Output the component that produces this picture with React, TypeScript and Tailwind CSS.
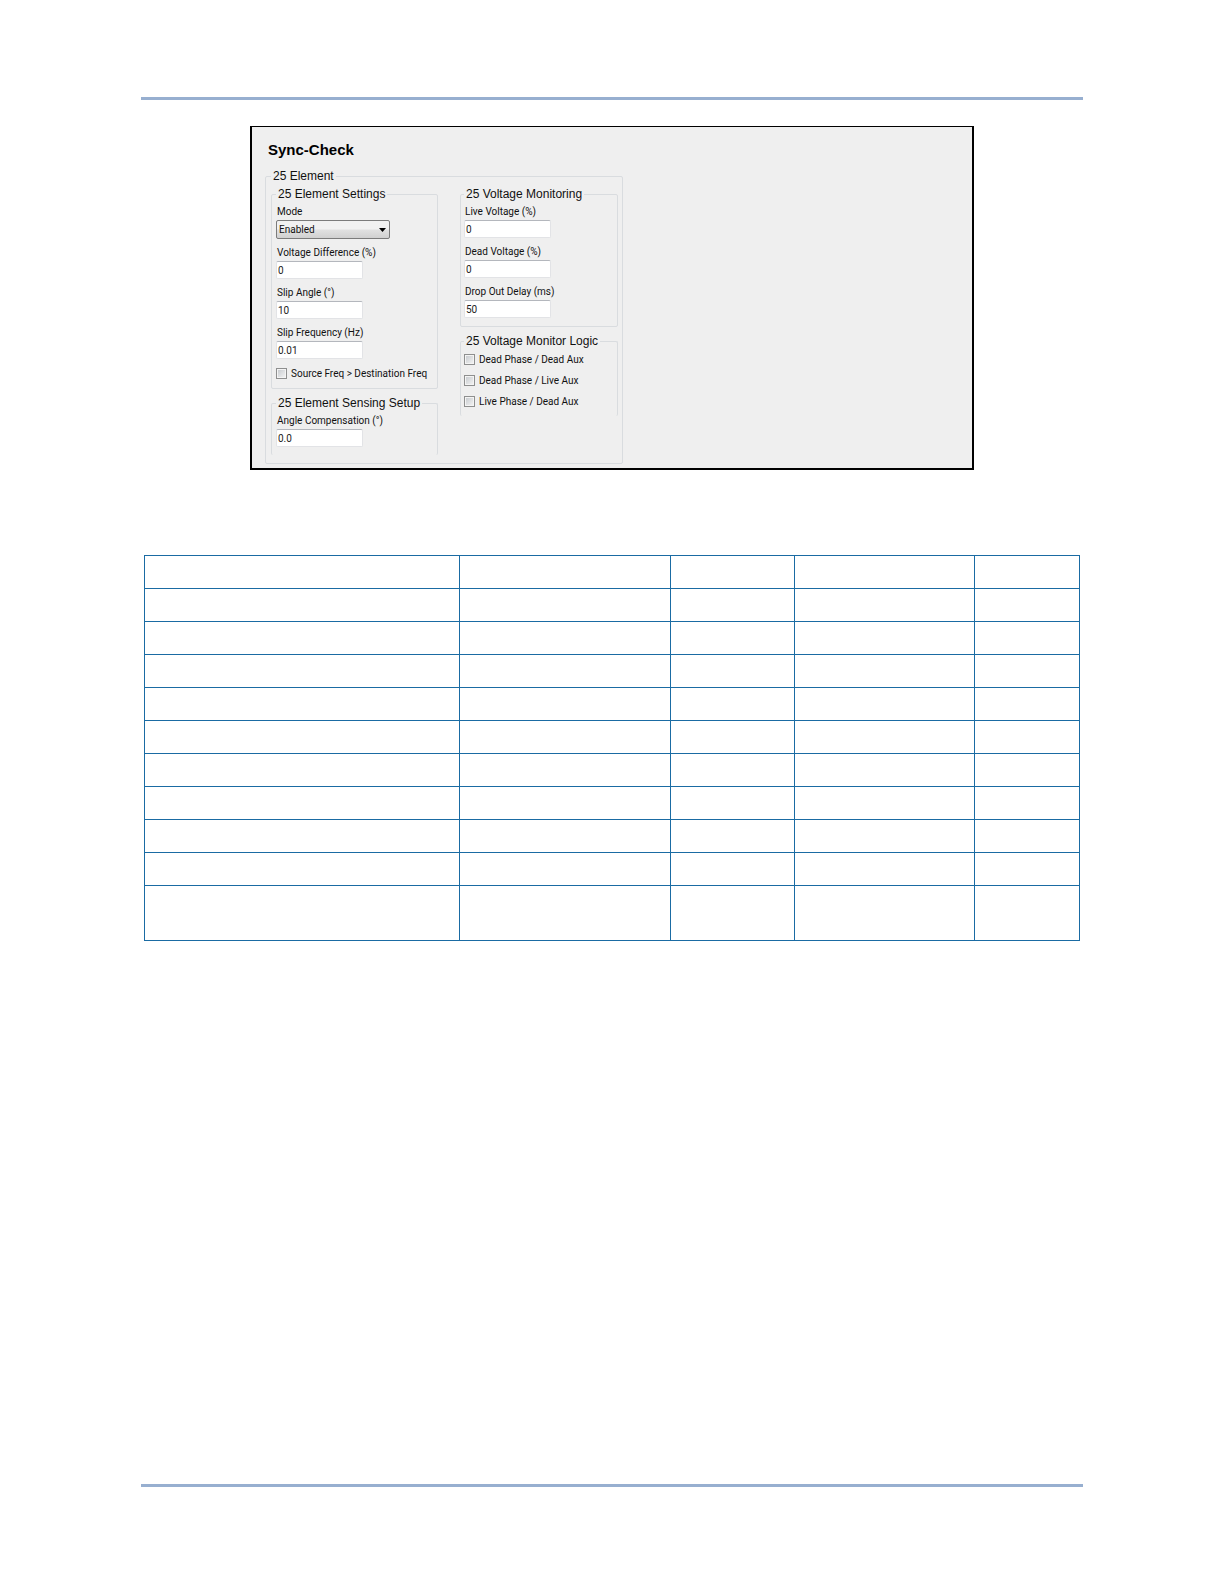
import { useState } from "react";
import type { ReactNode } from "react";

const ROWS = Array.from({ length: 11 }, (_, i) => i);
const COLUMNS = ["w-[315px]", "w-[211px]", "w-[124px]", "w-[180px]", "w-[105px]"];

type GroupProps = {
  title: string;
  className: string;
  children: ReactNode;
};

function Group({ title, className, children }: GroupProps) {
  return (
    <fieldset className={`min-w-0 rounded-xs border border-[#d9dcdf] ${className}`}>
      <legend className="px-0.5 font-['Liberation_Sans',Arial,sans-serif] text-xs leading-4 text-[#111]">
        {title}
      </legend>
      {children}
    </fieldset>
  );
}

type FieldProps = {
  id: string;
  label: string;
  initial: string;
};

function TextField({ id, label, initial }: FieldProps) {
  const [value, setValue] = useState(initial);

  return (
    <div className="flex flex-col items-start">
      <label htmlFor={id} className="pl-px leading-4">
        {label}
      </label>
      <input
        id={id}
        type="text"
        value={value}
        onChange={(e) => setValue(e.target.value)}
        className="h-[18px] w-[87px] rounded-xs border border-[#e2e3e6] border-t-[#b4b7bd] bg-white px-px text-[#222] outline-none"
      />
    </div>
  );
}

function CheckField({ id, label }: { id: string; label: string }) {
  return (
    <div className="flex h-4 items-center gap-1">
      <input
        id={id}
        type="checkbox"
        className="size-[11px] shrink-0 appearance-none border border-[#8e8f8f] bg-linear-to-br from-[#c4c8cc] to-[#f6f6f6] shadow-[inset_0_0_0_1px_#f4f4f4] checked:bg-none checked:bg-[#3c5a80]"
      />
      <label htmlFor={id} className="whitespace-nowrap">
        {label}
      </label>
    </div>
  );
}

function ModeSelect() {
  return (
    <div className="flex flex-col items-start">
      <label htmlFor="mode" className="pl-px leading-4">
        Mode
      </label>
      <div className="relative">
        <select
          id="mode"
          defaultValue="Enabled"
          className="block h-[19px] w-[114px] appearance-none rounded-xs border border-[#7b7b7b] bg-linear-to-b from-[#f1f1f1] from-45% via-[#e0e0e0] via-55% to-[#d0d0d0] pl-0.5 text-[#111] outline-none"
        >
          <option>Enabled</option>
          <option>Disabled</option>
        </select>
        <svg
          viewBox="0 0 7 4"
          className="pointer-events-none absolute top-2 right-1 h-1 w-[7px]"
          aria-hidden="true"
        >
          <path d="M0 0h7L3.5 4z" fill="#000" />
        </svg>
      </div>
    </div>
  );
}

function SyncCheckPanel() {
  return (
    <section className="mx-auto mt-[26px] w-full max-w-[724px] border-x-2 border-t border-b-2 border-black bg-[#efefef] px-[13px] pt-[13px] pb-1 font-[Roboto,Arial,sans-serif] text-[10px] text-[#111]">
      <h1 className="pl-[3px] font-['Liberation_Sans',Arial,sans-serif] text-[15px] leading-5 font-bold text-black">
        Sync-Check
      </h1>
      <Group title="25 Element" className="mt-2 w-fit pt-0.5 pr-1 pb-2 pl-[5px]">
        <div className="flex items-start gap-[22px]">
          <div className="flex w-[167px] flex-col gap-1.5">
            <Group title="25 Element Settings" className="px-1 pt-0.5 pb-[7px]">
              <div className="flex flex-col gap-1.5">
                <ModeSelect />
                <TextField id="voltage-difference" label="Voltage Difference (%)" initial="0" />
                <TextField id="slip-angle" label="Slip Angle (°)" initial="10" />
                <TextField id="slip-frequency" label="Slip Frequency (Hz)" initial="0.01" />
                <CheckField id="source-freq" label="Source Freq > Destination Freq" />
              </div>
            </Group>
            <Group title="25 Element Sensing Setup" className="border-b-0 px-1 pt-0.5 pb-2">
              <TextField id="angle-compensation" label="Angle Compensation (°)" initial="0.0" />
            </Group>
          </div>
          <div className="flex w-[158px] flex-col gap-1.5">
            <Group title="25 Voltage Monitoring" className="px-[3px] pt-0.5 pb-2">
              <div className="flex flex-col gap-1.5">
                <TextField id="live-voltage" label="Live Voltage (%)" initial="0" />
                <TextField id="dead-voltage" label="Dead Voltage (%)" initial="0" />
                <TextField id="drop-out-delay" label="Drop Out Delay (ms)" initial="50" />
              </div>
            </Group>
            <Group title="25 Voltage Monitor Logic" className="border-b-0 px-[3px] pt-0.5 pb-[7px]">
              <div className="flex flex-col gap-[5px]">
                <CheckField id="dead-dead" label="Dead Phase / Dead Aux" />
                <CheckField id="dead-live" label="Dead Phase / Live Aux" />
                <CheckField id="live-dead" label="Live Phase / Dead Aux" />
              </div>
            </Group>
          </div>
        </div>
      </Group>
    </section>
  );
}

function SettingsTable() {
  return (
    <div className="mt-[85px] px-[3px]">
      <table className="w-full table-fixed border-separate border-spacing-0 border-t border-l border-[#1a6ba3]">
        <colgroup>
          {COLUMNS.map((width) => (
            <col key={width} className={width} />
          ))}
        </colgroup>
        <tbody>
          {ROWS.map((row) => (
            <tr key={row} className="h-[33px] last:h-[55px]">
              {COLUMNS.map((col) => (
                <td key={col} className="border-r border-b border-[#1a6ba3] p-0" />
              ))}
            </tr>
          ))}
        </tbody>
      </table>
    </div>
  );
}

export default function App() {
  return (
    <div className="min-h-screen bg-white font-['Liberation_Sans',Arial,sans-serif]">
      <main className="mx-auto flex min-h-screen w-full max-w-[942px] flex-col py-[97px]">
        <hr className="w-full border-t-3 border-[#97afd0]" />
        <SyncCheckPanel />
        <SettingsTable />
        <hr className="mt-auto w-full border-t-3 border-[#97afd0]" />
      </main>
    </div>
  );
}
